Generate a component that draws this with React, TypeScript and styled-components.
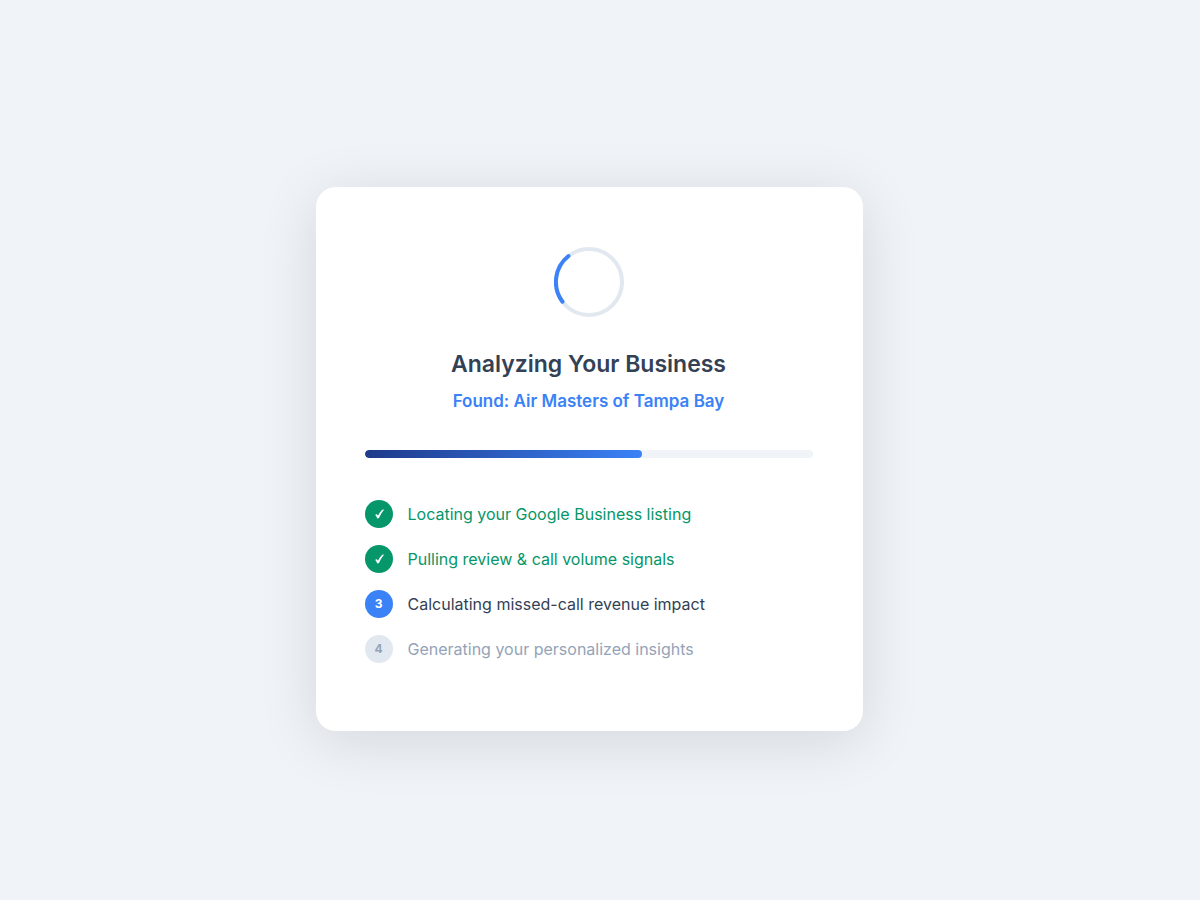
import React from "react";
import styled, { createGlobalStyle } from "styled-components";

const GlobalStyle = createGlobalStyle`
  * { box-sizing: border-box; }
  body {
    margin: 0;
    background: #f0f4f8;
    font-family: Inter, "Liberation Sans", sans-serif;
  }
`;

const Page = styled.main`
  min-height: 100vh;
  display: flex;
  align-items: center;
  justify-content: center;
  padding: 42px 44px 24px 22px;
`;

const Card = styled.section`
  width: 100%;
  max-width: 547px;
  padding: 60px 50px 60px 49px;
  background: #ffffff;
  border-radius: 20px;
  box-shadow: 0 10px 60px rgba(0, 0, 0, 0.12);
  display: flex;
  flex-direction: column;
  align-items: center;
`;

const Spinner = styled.svg`
  width: 70px;
  height: 70px;
  margin-bottom: 30px;
`;

const Title = styled.h1`
  margin: 0;
  font-size: 23px;
  line-height: 34px;
  font-weight: 600;
  color: #334155;
`;

const Found = styled.p`
  margin: 6px 0 35px;
  font-size: 17px;
  line-height: 28px;
  font-weight: 600;
  color: #3b82f6;
`;

const Track = styled.div`
  width: 100%;
  height: 8px;
  border-radius: 4px;
  background: #f0f4f8;
  overflow: hidden;
`;

const Fill = styled.div`
  height: 100%;
  border-radius: 4px;
  background: linear-gradient(90deg, #1e3a8a, #3b82f6);
`;

const Steps = styled.ol`
  width: 100%;
  margin: 42px 0 8px;
  padding: 0;
  list-style: none;
  display: flex;
  flex-direction: column;
  gap: 17px;
`;

type State = "done" | "active" | "pending";

const textColor = { done: "#059669", active: "#334155", pending: "#94a3b8" };
const badgeColor = { done: "#059669", active: "#3b82f6", pending: "#e2e8f0" };

const Step = styled.li<{ $state: State }>`
  display: flex;
  align-items: center;
  gap: 15px;
  font-size: 16px;
  line-height: 28px;
  color: ${(p) => textColor[p.$state]};
`;

const Badge = styled.span<{ $state: State }>`
  flex: none;
  display: flex;
  align-items: center;
  justify-content: center;
  width: 28px;
  height: 28px;
  border-radius: 50%;
  background: ${(p) => badgeColor[p.$state]};
  color: ${(p) => (p.$state === "pending" ? "#94a3b8" : "#ffffff")};
  font-size: 12px;
  font-weight: 700;
`;

const Check = styled.svg`
  width: 12px;
  height: 12px;
  fill: currentColor;
`;

const steps: { label: string; state: State }[] = [
  { label: "Locating your Google Business listing", state: "done" },
  { label: "Pulling review & call volume signals", state: "done" },
  { label: "Calculating missed-call revenue impact", state: "active" },
  { label: "Generating your personalized insights", state: "pending" },
];

export default function App() {
  const progress = 62;
  return (
    <>
      <GlobalStyle />
      <Page>
        <Card>
          <Spinner viewBox="0 0 70 70" fill="none" strokeWidth="4" aria-hidden="true">
            <circle cx="35" cy="35" r="33" stroke="#e2e8f0" />
            <path d="M8.5 54.7A33 33 0 0 1 14.5 9" stroke="#3b82f6" strokeLinecap="round" />
          </Spinner>
          <Title>Analyzing Your Business</Title>
          <Found>Found: Air Masters of Tampa Bay</Found>
          <Track role="progressbar" aria-label="Analysis progress" aria-valuenow={progress}>
            <Fill style={{ width: `${progress}%` }} />
          </Track>
          <Steps>
            {steps.map((s, i) => (
              <Step key={s.label} $state={s.state}>
                <Badge $state={s.state}>
                  {s.state === "done" ? (
                    <Check viewBox="0 0 12 12" role="img" aria-label="Done">
                      <path d="M2.2 7C2.9 6 4.1 6.1 4.5 6.9L4.9 7.7C6.2 5.4 7.5 3.4 9.2 1.7L11.2 1.5C9 4 7.4 6.8 6 10L4.2 10.5C3.8 9.1 3.2 7.9 2.2 7Z" />
                    </Check>
                  ) : (
                    i + 1
                  )}
                </Badge>
                <span>{s.label}</span>
              </Step>
            ))}
          </Steps>
        </Card>
      </Page>
    </>
  );
}
